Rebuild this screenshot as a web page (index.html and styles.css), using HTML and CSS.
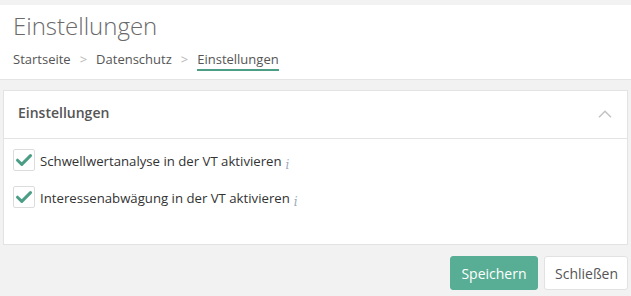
FILE: index.html
```html
<!DOCTYPE html>
<html lang="de">
<head>
<meta charset="utf-8">
<title>Einstellungen</title>
<link rel="stylesheet" href="styles.css">
</head>
<body>
<header class="page-header">
  <h1 class="page-title">Einstellungen</h1>
  <nav class="breadcrumb">
    <span class="crumb">Startseite</span>
    <span class="sep">&gt;</span>
    <span class="crumb">Datenschutz</span>
    <span class="sep">&gt;</span>
    <span class="crumb active">Einstellungen</span>
  </nav>
</header>

<section class="panel">
  <div class="panel-head">
    <h2 class="panel-title">Einstellungen</h2>
    <svg class="chevron" width="14" height="8" viewBox="0 0 14 8"><path d="M1 7.2 L7 1.3 L13 7.2" fill="none" stroke="#c4c4c4" stroke-width="1.6"/></svg>
  </div>
  <div class="panel-body">
    <label class="check-row">
      <span class="box"><svg width="18" height="16" viewBox="0 0 18 16"><path d="M2.5 8.2 L6.8 12.4 L15.5 3.6" fill="none" stroke="#4b9d85" stroke-width="3" stroke-linecap="round" stroke-linejoin="round"/></svg></span>
      <span class="label-text">Schwellwertanalyse in der VT aktivieren</span>
      <span class="info">i</span>
    </label>
    <label class="check-row">
      <span class="box"><svg width="18" height="16" viewBox="0 0 18 16"><path d="M2.5 8.2 L6.8 12.4 L15.5 3.6" fill="none" stroke="#4b9d85" stroke-width="3" stroke-linecap="round" stroke-linejoin="round"/></svg></span>
      <span class="label-text">Interessenabwägung in der VT aktivieren</span>
      <span class="info">i</span>
    </label>
  </div>
</section>

<div class="actions">
  <button class="btn btn-primary">Speichern</button>
  <button class="btn btn-default">Schließen</button>
</div>
</body>
</html>
```

FILE: styles.css
```css
* { box-sizing: border-box; }
html, body { margin: 0; padding: 0; }
body {
  background: #f2f2f2;
  font-family: "Open Sans", "Liberation Sans", sans-serif;
  color: #333;
  width: 631px;
  height: 296px;
  overflow: hidden;
}
.page-header {
  margin-top: 5px;
  background: #fff;
  border-bottom: 1px solid #e4e4e4;
  padding: 5px 13px 8px;
}
.page-title {
  margin: 0;
  font-size: 24px;
  font-weight: 300;
  line-height: 32px;
  color: #6a6a6a;
}
.breadcrumb {
  margin-top: 7px;
  display: flex;
  align-items: flex-start;
  font-size: 13px;
  line-height: 20px;
  color: #555;
}
.sep {
  color: #b8b8b8;
  margin: 0 9px 0 9px;
}
.crumb.active {
  border-bottom: 2px solid #4b9d85;
}
.panel {
  margin: 10px 3px 0;
  background: #fff;
  border: 1px solid #e3e3e3;
}
.panel-head {
  display: flex;
  align-items: center;
  justify-content: space-between;
  padding: 12px 15px 15px 14px;
  border-bottom: 1px solid #e3e3e3;
}
.panel-title {
  margin: 0;
  font-size: 14px;
  font-weight: 600;
  line-height: 20px;
  color: #555;
}
.chevron { display: block; margin-top: 2px; }
.panel-body {
  padding: 10px 9px 36px;
  display: flex;
  flex-direction: column;
  gap: 15px;
}
.check-row {
  display: flex;
  align-items: center;
  height: 22px;
  font-size: 13.2px;
  color: #333;
}
.box {
  width: 22px;
  height: 22px;
  border: 1px solid #dcdcdc;
  border-radius: 2px;
  display: flex;
  align-items: center;
  justify-content: center;
  margin-right: 5px;
  flex: none;
}
.box svg { display: block; }
.label-text { line-height: 22px; position: relative; top: 1px; }
.info {
  font-style: italic;
  font-size: 12px;
  color: #9aaabd;
  margin-left: 4px;
  position: relative;
  top: 5px;
  font-family: "DejaVu Serif", serif;
}
.actions {
  display: flex;
  justify-content: flex-end;
  gap: 6px;
  margin: 11px 3px 0;
}
.btn {
  height: 34px;
  font-family: "Open Sans", "Liberation Sans", sans-serif;
  font-size: 14px;
  border-radius: 3px;
  padding: 0 10px;
  cursor: pointer;
}
.btn-primary {
  background: #58ae94;
  border: 1px solid #58ae94;
  color: #fff;
  width: 88px;
}
.btn-default {
  background: #fff;
  border: 1px solid #e2e2e2;
  color: #555;
  width: 84px;
}
```
